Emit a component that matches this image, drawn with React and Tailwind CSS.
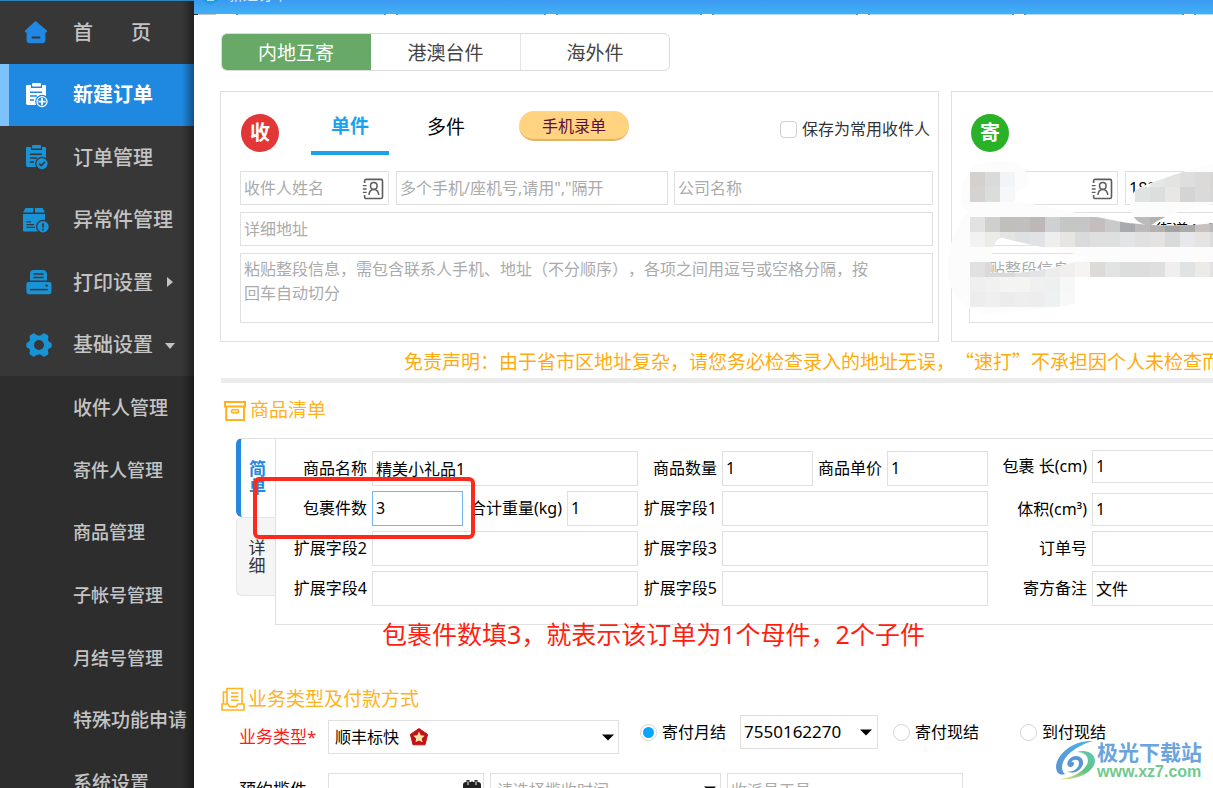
import React from "react";

const INPUT_BASE =
  "min-w-0 border bg-white pl-[3px] text-black outline-none placeholder:text-[#ababab] placeholder:opacity-100";
const INPUT = INPUT_BASE + " border-[#e0e0e0]";

function HomeIcon() {
  return (
    <svg viewBox="0 0 24 24" className="h-6 w-6">
      <path d="M12 1.2 L22.8 10.6 C23.6 11.6 23 12.6 22 12.6 H21.4 V20 C21.4 22.2 20.4 23.2 18.2 23.2 H5.8 C3.6 23.2 2.6 22.2 2.6 20 V12.6 H2 C1 12.6 .4 11.6 1.2 10.6 L10 2.2 C11 1 13 1 14 2.2 Z" fill="#2088e2" />
      <rect x="7.5" y="16.4" width="9" height="2.2" rx="1.1" fill="#373737" />
    </svg>
  );
}

function ClipboardIcon({ color, bg, children }) {
  return (
    <svg viewBox="0 0 24 26" className="h-[26px] w-6">
      <path d="M2 3 H6 V6 H17 V3 H19.5 C20.6 3 21 3.4 21 4.5 V23 H3.5 C2 23 1 22.4 1 21 V4.5 C1 3.4 1.2 3 2 3 Z" fill={color} />
      <rect x="7" y="1" width="9" height="3.6" rx="1" fill={color} />
      <path d="M5 10.2 H17 M5 14 H12 M5 18 H9" stroke={bg} strokeWidth="1.5" fill="none" />
      <circle cx="17" cy="19.6" r="6.8" fill={bg} />
      <circle cx="17" cy="19.6" r="5.6" fill={color} />
      {children}
    </svg>
  );
}

function NewOrderIcon() {
  return (
    <ClipboardIcon color="#ffffff" bg="#1f88e0">
      <circle cx="17" cy="19.6" r="4.4" fill="#1f88e0" />
      <path d="M17 16 V23.2 M13.4 19.6 H20.6" stroke="#ffffff" strokeWidth="1.8" />
    </ClipboardIcon>
  );
}

function OrderIcon() {
  return (
    <ClipboardIcon color="#1893d5" bg="#373737">
      <path d="M14.2 19.6 L16.3 21.6 L20 17.8" stroke="#373737" strokeWidth="1.6" fill="none" />
    </ClipboardIcon>
  );
}

function AbnormalIcon() {
  return (
    <svg viewBox="0 0 26 26" className="h-[26px] w-[26px]">
      <path d="M2.5 1 H10.3 V5.6 H0 Z M12 1 H19.5 L22 5.6 H12 Z" fill="#1893d5" />
      <path d="M0 7 H22 V24.5 H1.5 C.5 24.5 0 24 0 23 Z" fill="#1893d5" />
      <path d="M3.5 14.8 H8 M3.5 17.6 H11 M3.5 20.4 H12" stroke="#373737" strokeWidth="1.3" />
      <circle cx="20" cy="19.8" r="7" fill="#373737" />
      <circle cx="20" cy="19.8" r="5.7" fill="#1893d5" />
      <path d="M20 16.2 V20.6 M20 21.8 V23.6" stroke="#373737" strokeWidth="1.7" />
    </svg>
  );
}

function PrinterIcon() {
  return (
    <svg viewBox="0 0 26 26" className="h-[26px] w-[26px]">
      <path d="M4 13 V4.5 C4 2 5.5 1 8 1 H16.5 C19.5 1 21 3 21 5 V13 Z" fill="#1893d5" />
      <path d="M7.5 5 H17.5 M7.5 8.4 H17.5" stroke="#373737" strokeWidth="1.5" />
      <path d="M2.5 13 H23.5 C24.6 13 25.5 14 25.5 15 V22.8 C25.5 24.4 24.6 25.2 23 25.2 H3 C1.2 25.2 .4 24.4 .4 22.8 V15 C.4 14 1.4 13 2.5 13 Z" fill="#1893d5" />
      <path d="M3.5 12.2 H22" stroke="#373737" strokeWidth="1.4" />
      <path d="M4 20.6 H21.8" stroke="#373737" strokeWidth="1.5" />
      <circle cx="20.6" cy="16.6" r="1.2" fill="#373737" />
    </svg>
  );
}

function GearIcon() {
  return (
    <svg viewBox="0 0 26 26" className="h-[26px] w-[26px]">
      <path
        fillRule="evenodd"
        d="M7.2 1.4 C8 .9 8.8 1.2 9.4 1.9 C11.4 3.9 14.6 3.9 16.6 1.9 C17.2 1.2 18 .9 18.8 1.4 L21.8 3.2 C22.6 3.7 22.6 4.6 22.3 5.4 C21.5 8 22.4 9.9 24.6 10.4 C25.4 10.7 25.7 11.3 25.7 12.1 V14.2 C25.7 15 25.3 15.6 24.5 15.8 C22.2 16.4 21.5 18.4 22.3 20.8 C22.6 21.5 22.5 22.3 21.8 22.8 L18.8 24.6 C18 25.1 17.2 24.8 16.6 24.1 C14.6 22.1 11.4 22.1 9.4 24.1 C8.8 24.8 8 25.1 7.2 24.6 L4.2 22.8 C3.5 22.3 3.4 21.5 3.7 20.8 C4.5 18.4 3.8 16.4 1.5 15.8 C.7 15.6 .3 15 .3 14.2 V12.1 C.3 11.3 .6 10.7 1.4 10.4 C3.6 9.9 4.5 8 3.7 5.4 C3.4 4.6 3.5 3.7 4.2 3.2 Z M13 8 A5 5 0 1 0 13 18 A5 5 0 1 0 13 8 Z"
        fill="#1893d5"
      />
    </svg>
  );
}

function ContactIcon() {
  return (
    <svg viewBox="0 0 22 22" className="h-[22px] w-[22px]" fill="none" stroke="#5c5c5c">
      <path d="M2.6 5 V3 C2.6 1.9 3.2 1.4 4.2 1.4 H19 C20 1.4 20.5 1.9 20.5 3 V18.8 C20.5 20 20 20.5 19 20.5 H4.2 C3.2 20.5 2.6 20 2.6 18.8 V17" strokeWidth="1.6" />
      <path d="M.8 7.6 H4.6 M.8 11 H4.6 M.8 14.4 H4.6" strokeWidth="1.4" />
      <circle cx="11.8" cy="7.9" r="3.3" strokeWidth="1.5" />
      <path d="M7 17 C7.2 13.4 9 11.4 11.8 11.4 C14.6 11.4 16.4 13.4 16.8 17" strokeWidth="1.5" />
    </svg>
  );
}

function Caret({ className }) {
  return (
    <svg viewBox="0 0 12 7" className={"pointer-events-none absolute h-[7px] w-3 " + className}>
      <path d="M0 .5 H12 L6 6.5 Z" fill="#000000" />
    </svg>
  );
}

const mainItems = [
  { name: "首", tail: "页", icon: <HomeIcon />, pad: "pl-6" },
  { name: "新建订单", icon: <NewOrderIcon />, pad: "pl-[25px]", active: true },
  { name: "订单管理", icon: <OrderIcon />, pad: "pl-[25px]" },
  { name: "异常件管理", icon: <AbnormalIcon />, pad: "pl-[23px]" },
  { name: "打印设置", icon: <PrinterIcon />, pad: "pl-[26px]", arrow: "right" },
  { name: "基础设置", icon: <GearIcon />, pad: "pl-[26px]", arrow: "down" },
];

const subItems = [
  { name: "收件人管理", size: "text-[19px]" },
  { name: "寄件人管理", size: "text-[18px]" },
  { name: "商品管理", size: "text-[18px]" },
  { name: "子帐号管理", size: "text-[18px]" },
  { name: "月结号管理", size: "text-[18px]" },
  { name: "特殊功能申请", size: "text-[19px]" },
  { name: "系统设置", size: "text-[19px]" },
];

function Sidebar() {
  return (
    <nav className="relative w-[194px] shrink-0 border-t border-[#2c84bd] bg-[#2d2d2d] font-medium text-[#c4c4c4]">
      <ul className="flex h-[375px] flex-col bg-[#373737]">
        {mainItems.map((it) => (
          <li key={it.name} className="flex flex-1">
            <a
              href="#"
              className={
                it.active
                  ? "relative flex w-full items-center bg-[#1f88e0] text-white"
                  : "relative flex w-full items-center"
              }
            >
              {it.active && <span className="absolute inset-y-0 left-0 w-[9px] bg-[#7cc2fd]" />}
              <span className={"w-[73px] shrink-0 " + it.pad}>{it.icon}</span>
              <span className={it.active ? "pt-px text-[20px] font-bold" : "pt-px text-[20px]"}>{it.name}</span>
              {it.tail && <span className="ml-[38px] pt-px text-[20px]">{it.tail}</span>}
              {it.arrow === "right" && (
                <svg viewBox="0 0 6 10" className="ml-[14px] h-[10px] w-[6px]">
                  <path d="M0 0 L6 5 L0 10 Z" fill="#c4c4c4" />
                </svg>
              )}
              {it.arrow === "down" && (
                <svg viewBox="0 0 10 6" className="mt-[2px] ml-3 h-[6px] w-[10px]">
                  <path d="M0 0 H10 L5 6 Z" fill="#c4c4c4" />
                </svg>
              )}
            </a>
          </li>
        ))}
      </ul>
      <ul className="flex h-[438px] flex-col">
        {subItems.map((it) => (
          <li key={it.name} className="flex flex-1">
            <a href="#" className={"flex w-full items-center pt-px pl-[73px] whitespace-nowrap " + it.size}>
              {it.name}
            </a>
          </li>
        ))}
      </ul>
      <div className="pointer-events-none absolute inset-y-0 right-0 w-3 bg-gradient-to-r from-transparent to-black/40" />
    </nav>
  );
}

function Titlebar() {
  return (
    <div>
      <header className="relative h-[14px] overflow-hidden bg-gradient-to-b from-[#3d99f1] to-[#3fb1f6]">
        <div className="absolute -top-[15px] left-[7px] h-[19px] w-[19px] rounded-full bg-[#1a9fd9]">
          <div className="mx-auto mt-[13px] h-[3px] w-[7px] bg-[#a9dcf5]" />
        </div>
        <h1 className="absolute -top-[14px] left-[34px] text-[15px] leading-4 text-white/80">新建订单</h1>
      </header>
      <div className="flex h-px gap-[10px]">
        <span className="w-[22px] border-l-4 border-[#333333] bg-[#c4c4c4]" />
        <span className="w-0" />
        <span className="w-[150px] border-x-2 border-[#4a97bb] bg-[#b5dcee]" />
        <span className="w-[150px] border-x-2 border-[#4a97bb] bg-[#b5dcee]" />
        <span className="w-[146px] border-x-2 border-[#4a97bb] bg-[#b5dcee]" />
        <span className="w-[146px] border-x-2 border-[#4a97bb] bg-[#b5dcee]" />
        <span className="w-[146px] border-x-2 border-[#4a97bb] bg-[#b5dcee]" />
        <span className="w-[160px] border-x-2 border-[#4a97bb] bg-[#b5dcee]" />
        <span className="flex-1 border-l-2 border-[#4a97bb] bg-[#b5dcee]" />
      </div>
    </div>
  );
}

function ReceiverPanel() {
  return (
    <section className="w-[719px] shrink-0 border border-[#e0e0e0] pr-[5px] pb-[18px] pl-[19px]">
      <div className="flex h-[79px] items-start pt-[19px] pr-[3px] pl-px">
        <div className="mt-[3px] flex h-[38px] w-[38px] items-center justify-center rounded-full bg-[#e23637] text-[20px] font-bold text-white">
          收
        </div>
        <button className="ml-8 h-11 w-[78px] border-b-4 border-[#1aa3ec] pb-[10px] text-[19px] leading-[30px] font-bold text-[#1aa3ec]">
          单件
        </button>
        <button className="ml-[18px] h-11 w-[78px] pt-px pb-[13px] text-[19px] leading-[30px] text-black">多件</button>
        <button className="ml-[34px] h-[30px] w-[110px] rounded-full border-b-2 border-[#e2b267] bg-[#ffd380] pt-px text-[16px] leading-7 text-[#5d0f3c]">
          手机录单
        </button>
        <label className="ml-auto flex h-9 items-center gap-[5px] text-[16px] text-[#333333]">
          <input type="checkbox" className="h-[17px] w-[17px] appearance-none rounded-sm border border-[#cfcfcf] bg-white" />
          保存为常用收件人
        </label>
      </div>
      <div className="flex flex-col gap-[7px]">
        <div className="flex">
          <div className="relative w-[149px]">
            <input aria-label="收件人姓名" placeholder="收件人姓名" className={INPUT + " h-[34px] w-full"} />
            <button aria-label="选择收件人" className="absolute top-[7px] right-[5px]">
              <ContactIcon />
            </button>
          </div>
          <input aria-label="收件人电话" placeholder={'多个手机/座机号,请用","隔开'} className={INPUT + " ml-[7px] h-[34px] w-[272px]"} />
          <input aria-label="公司名称" placeholder="公司名称" className={INPUT + " ml-[6px] h-[34px] flex-1"} />
        </div>
        <input aria-label="详细地址" placeholder="详细地址" className={INPUT + " h-[34px] w-full"} />
        <textarea
          aria-label="整段信息"
          placeholder="粘贴整段信息，需包含联系人手机、地址（不分顺序），各项之间用逗号或空格分隔，按回车自动切分"
          className={INPUT + " block h-[70px] w-full resize-none overflow-hidden pt-[3px] pr-[58px] leading-6 [text-spacing-trim:space-all]"}
        />
      </div>
    </section>
  );
}

const mosaic = [
  [90, 36, ["#d2d1ce", "#d9dad9", "#f2f4f7"]],
  [90, 81, ["#d4d3d1", "#dbdddb", "#f5f7f9"]],
  [630, 36, ["#e5e6e6", "#e3e3e2", "#dedede", "#dbdad9", "#d6d6d6"]],
  [585, 81, ["#dfe3e2", "#dcdedd", "#e9e7e5", "#d4d4d4", "#dadada", "#d7d7d8"]],
  [90, 171, ["#e3e1e2", "#cfd0cd", "#c0bfbc", "#c1c0bf", "#bdb8b7", "#cfd0d1", "#c5c6c6", "#c7c6c6", "#c4bfbe", "#c9cac9", "#a8aaad", "#bcbaba", "#b2b1b0", "#a3a3a3", "#ababab", "#c5c2c1", "#bbb9b9"]],
  [90, 216, ["#f2f2f2", "#ebebe8", "#e4e4e4", "#dfe0e2", "#e1e2e5", "#eeeeef", "#e7e5e2", "#d9dadb", "#dedfde", "#dce0df", "#e3e4e5", "#dfe0df", "#e4e3e1", "#d7dad9", "#e7e8eb", "#e6e4e2", "#dcdcdc"]],
  [90, 306, ["#e1e1e1", "#d9d9dc", "#d8d8dd", "#e0e0e0", "#e3e4e5", "#ececec", "#f0efee", "#f5f4f2", "#dcdbd8", "#e1e4e2", "#dcdedd", "#dddddd", "#dfdfdf", "#efeff0", "#e0e3e4", "#ecebe8", "#e2e2e2"]],
  [90, 351, ["#eeefee", "#f1f1f0", "#f4f4f2", "#f4f4f2", "#f0f0f0", "#eeefef", "#f7f7f7"]],
  [90, 396, ["#ededed", "#eeefee", "#ececec", "#eeeeee", "#ededee", "#eef1f1", "#f8f8f8"]],
];

function PrivacyMask() {
  return (
    <svg viewBox="0 0 819 540" className="pointer-events-none absolute top-[68px] -left-3 h-[180px] w-[273px]">
      <defs>
        <clipPath id="smudge">
          <path
            clipRule="evenodd"
            d="M64 125 C62 80 75 25 115 14 C155 4 210 -2 235 14 C265 30 272 70 262 78 C250 90 225 92 224 126 L262 130 C370 150 470 172 550 187 C610 196 720 202 819 190 L819 351 H404 V431 C340 445 200 458 130 462 C70 450 25 400 22 330 C22 260 50 190 84 155 C74 150 66 140 64 125 Z M155 283 C160 250 170 236 185 233 C270 255 360 272 450 292 C390 312 310 334 240 338 H150 Z"
          />
          <path d="M819 12 C750 25 650 62 600 82 C572 96 566 126 573 152 C582 182 605 195 632 196 C680 162 740 145 819 132 Z" />
        </clipPath>
      </defs>
      <g clipPath="url(#smudge)" shapeRendering="crispEdges">
        <rect width="819" height="540" fill="#fcfcfc" />
        {mosaic.map(([x, y, cells]) =>
          cells.map((fill, i) => (
            <rect key={x + "-" + y + "-" + i} x={x + i * 45} y={y} width="45" height="45" fill={fill} />
          ))
        )}
      </g>
    </svg>
  );
}

function SenderPanel() {
  return (
    <section className="relative ml-3 min-w-0 flex-1 border border-r-0 border-[#e0e0e0] pb-[18px] pl-[17px]">
      <div className="flex h-[79px] items-start pt-[22px] pl-[2px]">
        <div className="flex h-[38px] w-[38px] items-center justify-center rounded-full bg-[#29b128] text-[20px] font-bold text-white">
          寄
        </div>
      </div>
      <div className="flex flex-col gap-[7px]">
        <div className="flex">
          <div className="relative w-[149px] shrink-0">
            <input aria-label="寄件人姓名" className={INPUT + " h-[34px] w-full"} />
            <button aria-label="选择寄件人" className="absolute top-[7px] right-[5px]">
              <ContactIcon />
            </button>
          </div>
          <input aria-label="寄件人电话" defaultValue="189" className={INPUT + " ml-[7px] h-[34px] flex-1 border-r-0"} />
        </div>
        <input
          aria-label="寄件人地址"
          defaultValue="街道44号"
          className={INPUT + " h-[34px] w-full border-r-0 pl-[186px]"}
        />
        <textarea
          aria-label="寄件人整段信息"
          placeholder="粘贴整段信息"
          className={INPUT + " block h-[70px] w-full resize-none overflow-hidden border-r-0 pt-[3px] leading-6"}
        />
      </div>
      <PrivacyMask />
    </section>
  );
}

function Field({ label, id, labelClass, inputClass, value, focused }) {
  return (
    <>
      <label htmlFor={id} className={"shrink-0 pb-[2px] text-right whitespace-nowrap " + labelClass}>
        {label}
      </label>
      <input
        id={id}
        defaultValue={value}
        className={(focused ? INPUT_BASE + " border-[#6fb6f5] " : INPUT + " ") + "pb-[2px] " + inputClass}
      />
    </>
  );
}

function GoodsSection() {
  return (
    <section>
      <h2 className="flex h-[55px] items-center gap-1 pl-1 text-[19px] text-[#ffb21d]">
        <svg viewBox="0 0 22 20" className="h-5 w-[22px]" fill="none" stroke="#ffb21d" strokeWidth="2">
          <path d="M1 1 H21 V5.6 H1 Z M2.2 5.6 V19 H20 V5.6" />
          <rect x="7.4" y="8.8" width="7.4" height="2.8" rx="1.4" strokeWidth="1.6" />
        </svg>
        商品清单
      </h2>
      <div className="relative flex pl-4">
        <div className="flex w-[39px] flex-col text-[17px] leading-[18px]">
          <button className="h-[79px] rounded-l-md border-t border-l-[5px] border-t-[#e0e0e0] border-l-[#2488e0] pr-[6px] pl-[5px] font-bold text-[#2488e0]">
            <span className="mx-auto block w-[18px]">简单</span>
          </button>
          <button className="h-[79px] rounded-l-md border border-r-0 border-[#e6e6e6] bg-[#f5f5f5] pl-[2px] text-[#333333]">
            <span className="mx-auto block w-[18px]">详细</span>
          </button>
        </div>
        <div className="flex min-w-0 flex-1 border border-r-0 border-[#e0e0e0] pt-[11px] pb-[18px]">
          <div className="flex flex-col gap-[5px] pt-px">
            <div className="flex items-center">
              <Field label="商品名称" id="gname" value="精美小礼品1" labelClass="w-24 pr-[5px]" inputClass="h-[35px] w-[266px]" />
              <Field label="商品数量" id="gqty" value="1" labelClass="w-[84px] pr-[5px]" inputClass="h-[35px] w-[91px]" />
              <Field label="商品单价" id="gprice" value="1" labelClass="w-[74px] pr-[5px]" inputClass="h-[35px] w-[101px]" />
            </div>
            <div className="flex items-center">
              <Field label="包裹件数" id="pcount" value="3" focused labelClass="w-24 pr-[5px]" inputClass="h-[35px] w-[91px]" />
              <Field label="合计重量(kg)" id="weight" value="1" labelClass="w-[104px] pr-[5px]" inputClass="h-[35px] w-[71px]" />
              <Field label="扩展字段1" id="ext1" labelClass="w-[84px] pr-[5px]" inputClass="h-[35px] w-[266px]" />
            </div>
            <div className="flex items-center">
              <Field label="扩展字段2" id="ext2" labelClass="w-24 pr-[5px]" inputClass="h-[35px] w-[266px]" />
              <Field label="扩展字段3" id="ext3" labelClass="w-[84px] pr-[5px]" inputClass="h-[35px] w-[266px]" />
            </div>
            <div className="flex items-center">
              <Field label="扩展字段4" id="ext4" labelClass="w-24 pr-[5px]" inputClass="h-[35px] w-[266px]" />
              <Field label="扩展字段5" id="ext5" labelClass="w-[84px] pr-[5px]" inputClass="h-[35px] w-[266px]" />
            </div>
          </div>
          <div className="flex min-w-0 flex-1 flex-col gap-[5px]">
            <div className="flex items-center pb-[5px]">
              <Field label="包裹 长(cm)" id="plen" value="1" labelClass="w-[104px] pr-[5px]" inputClass="h-[33px] flex-1 border-r-0" />
            </div>
            <div className="flex items-center">
              <Field label="体积(cm³)" id="pvol" value="1" labelClass="w-[104px] pr-[5px]" inputClass="h-[33px] flex-1 border-r-0" />
            </div>
            <div className="flex items-center">
              <Field label="订单号" id="orderno" labelClass="w-[104px] pr-[5px]" inputClass="h-[35px] flex-1 border-r-0" />
            </div>
            <div className="flex items-center">
              <Field label="寄方备注" id="remark" value="文件" labelClass="w-[104px] pr-[5px]" inputClass="h-[35px] flex-1 border-r-0" />
            </div>
          </div>
        </div>
        <div className="pointer-events-none absolute top-[39px] left-[33px] h-[62px] w-[222px] rounded-md border-4 border-[#fc2a1c]" />
        <p className="absolute top-[182px] left-[162px] text-[25px] leading-7 whitespace-nowrap text-[#ff1f10]">
          包裹件数填3，就表示该订单为1个母件，2个子件
        </p>
      </div>
    </section>
  );
}

function Radio({ label, checked, className }) {
  return (
    <label className={"flex h-[34px] items-center gap-[5px] whitespace-nowrap " + className}>
      <input
        type="radio"
        name="pay"
        defaultChecked={checked}
        className="h-[17px] w-[17px] appearance-none rounded-full border border-[#d4d4d4] bg-white bg-clip-content p-[2px] checked:bg-[#0aa5fc]"
      />
      {label}
    </label>
  );
}

function ServiceSection() {
  return (
    <section className="mt-[61px]">
      <h2 className="flex h-[26px] items-center gap-[3px] pl-px text-[19px] text-[#ffb21d]">
        <svg viewBox="0 0 24 24" className="h-6 w-6" fill="none" stroke="#ffb21d" strokeWidth="1.6">
          <path d="M6 17 V1.5 H21 V17 M6 5 H2.4 V17 M1 17 H7 L8.6 19.6 H15.4 L17 17 H23 V23 H1 Z" />
          <path d="M10 6 H17.4 M10 9.6 H17.4 M10 13.2 H17.4" />
        </svg>
        业务类型及付款方式
      </h2>
      <div className="mt-[3px] flex items-start">
        <label htmlFor="svc" className="mt-[5px] w-[108px] pl-[19px] text-[17px] leading-[34px] text-[#ff1a1a]">
          业务类型*
        </label>
        <div className="relative mt-[5px] w-[291px]">
          <select id="svc" className="h-[34px] w-full appearance-none border border-[#e0e0e0] bg-white pl-[6px] text-black">
            <option>顺丰标快</option>
          </select>
          <svg viewBox="0 0 18 18" className="pointer-events-none absolute top-2 left-[82px] h-[18px] w-[18px]">
            <path d="M9 .5 L17.6 6.4 L15 16.8 H3 L.4 6.4 Z" fill="#c11414" stroke="#c11414" strokeLinejoin="round" />
            <path d="M9 3.6 L10.7 7.2 L14.6 7.7 L11.8 10.4 L12.5 14.3 L9 12.4 L5.5 14.3 L6.2 10.4 L3.4 7.7 L7.3 7.2 Z" fill="#fde3ac" />
          </svg>
          <Caret className="top-[14px] right-[5px]" />
        </div>
        <Radio label="寄付月结" checked className="ml-[21px]" />
        <div className="relative ml-[14px] w-[138px]">
          <select aria-label="月结账号" className="h-[34px] w-full appearance-none border border-[#e0e0e0] bg-white pl-[3px] text-[17px] text-black">
            <option>7550162270</option>
          </select>
          <Caret className="top-[14px] right-[6px]" />
        </div>
        <Radio label="寄付现结" className="ml-[15px]" />
        <Radio label="到付现结" className="ml-[41px]" />
      </div>
      <div className="mt-[19px] flex items-start">
        <label htmlFor="pickup" className="w-[108px] pl-[19px] text-[17px] leading-[34px] text-black">
          预约揽件
        </label>
        <div className="relative w-[156px]">
          <input id="pickup" className={INPUT + " h-[34px] w-full"} />
          <svg viewBox="0 0 18 20" className="absolute top-[7px] right-[3px] h-5 w-[18px]">
            <rect x="1" y="3" width="16" height="16" rx="2" fill="none" stroke="#222222" strokeWidth="2" />
            <path d="M1 3 H17 V8 H1 Z" fill="#222222" />
            <path d="M5 0 V5 M8 3 H10 M13 0 V5" stroke="#222222" strokeWidth="3" />
            <path d="M5 1.4 V5 M13 1.4 V5" stroke="#ffffff" strokeWidth="1" />
          </svg>
        </div>
        <div className="relative ml-[6px] w-[231px]">
          <select aria-label="揽收时间" className="h-[34px] w-full appearance-none border border-[#e0e0e0] bg-white pl-[6px] text-[#ababab]">
            <option>请选择揽收时间</option>
          </select>
          <Caret className="top-[13px] right-[5px]" />
        </div>
        <input aria-label="收派员工号" placeholder="收派员工号" className={INPUT + " ml-[6px] h-[34px] w-[236px]"} />
      </div>
    </section>
  );
}

function Watermark() {
  return (
    <div className="pointer-events-none absolute right-[11px] bottom-[8px] flex items-center">
      <svg viewBox="0 0 42 40" className="h-10 w-[42px]">
        <defs>
          <linearGradient id="wmBlue" x1="1" y1="0" x2="0" y2="1">
            <stop offset="0" stopColor="#4fb0ea" />
            <stop offset="1" stopColor="#5b93d3" />
          </linearGradient>
          <linearGradient id="wmGreen" x1="1" y1="0" x2="0" y2="1">
            <stop offset="0" stopColor="#5cc9b4" />
            <stop offset=".5" stopColor="#62c380" />
            <stop offset="1" stopColor="#efe87a" />
          </linearGradient>
        </defs>
        <path d="M38 1 C20 0 3 12 1 26 C1 33 5 36 10 34 C5 30 6 20 16 12 C22 7 30 3 38 1 Z" fill="url(#wmBlue)" />
        <path d="M12 31 C17 33 24 29 24 23 C24 19 19 19 16 22 C20 21 20 26 16 27 C11 28 11 20 17 17 C23 14 29 18 28 24 C26 31 18 35 12 31 Z" fill="#5a96d2" />
        <path d="M22 12 C31 9 40 13 40 21 C39 33 20 41 4 39 C20 38 32 29 33 21 C33 15 28 12 22 12 Z" fill="url(#wmGreen)" />
      </svg>
      <div className="flex flex-col">
        <span className="text-[21px] leading-6 font-bold whitespace-nowrap text-[#6ba4dc]">极光下载站</span>
        <span className="font-['Liberation_Sans'] text-[16px] leading-4 font-bold text-[#72c98d]">www.xz7.com</span>
      </div>
    </div>
  );
}

export default function App() {
  return (
    <div
      lang="zh-CN"
      className="relative flex h-screen overflow-hidden bg-white font-['Noto_Sans','Noto_Sans_CJK_SC',sans-serif] text-[16px] text-black"
    >
      <Sidebar />
      <main className="min-w-0 flex-1">
        <Titlebar />
        <div className="pt-[18px] pl-[26px]">
          <div className="ml-px flex w-[449px] overflow-hidden rounded-md border border-[#dcdcdc] text-[19px] text-[#444444]">
            <button className="-my-px -ml-px h-[38px] w-[150px] bg-[#68a968] pt-[3px] text-white">内地互寄</button>
            <button className="-my-px h-[38px] w-[150px] border-r border-[#e4e4e4] pt-[3px]">港澳台件</button>
            <button className="-my-px h-[38px] flex-1 pt-[3px]">海外件</button>
          </div>
          <div className="mt-5 flex">
            <ReceiverPanel />
            <SenderPanel />
          </div>
          <p className="h-9 pt-px pl-[184px] font-['Noto_Sans_CJK_SC',sans-serif] text-[19px] leading-9 whitespace-nowrap text-[#ffab0f] [text-spacing-trim:space-all]">
            免责声明：由于省市区地址复杂，请您务必检查录入的地址无误，“速打”不承担因个人未检查而导致的问题
          </p>
          <hr className="ml-px h-[5px] border-0 bg-[#ebebeb]" />
          <GoodsSection />
          <ServiceSection />
        </div>
      </main>
      <Watermark />
    </div>
  );
}
